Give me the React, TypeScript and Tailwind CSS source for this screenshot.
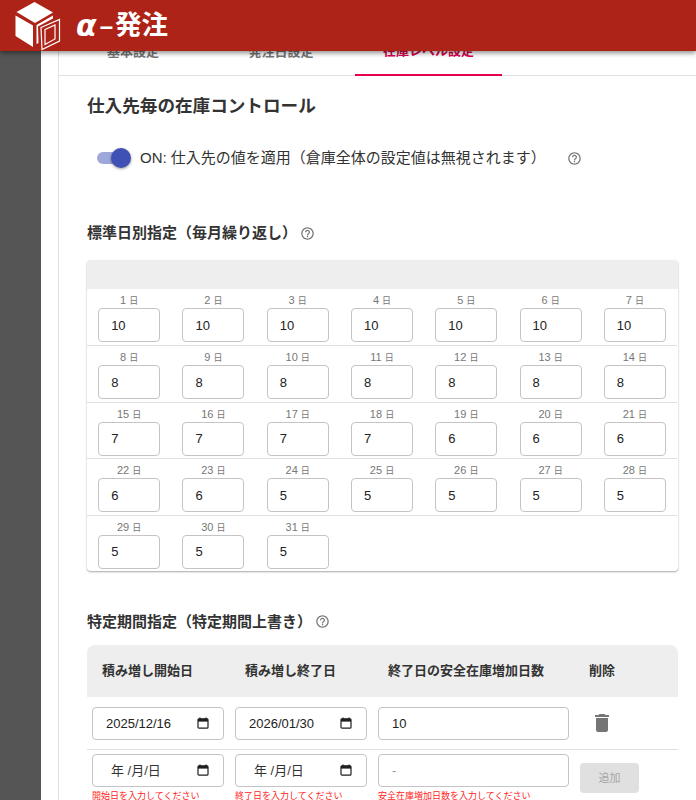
import React from "react";

const font = { fontFamily: '"Liberation Sans", "Noto Sans CJK JP", sans-serif' };

const days = [10,10,10,10,10,10,10,8,8,8,8,8,8,8,7,7,7,7,6,6,6,6,6,5,5,5,5,5,5,5,5];
const rows: number[][] = [];
for (let i = 0; i < days.length; i += 7) rows.push(days.slice(i, i + 7).map((_, j) => i + j));

function Help() {
  return (
    <svg width="15" height="15" viewBox="0 0 24 24" fill="#757575" className="shrink-0">
      <path d="M11 18h2v-2h-2v2zm1-16C6.48 2 2 6.48 2 12s4.48 10 10 10 10-4.48 10-10S17.52 2 12 2zm0 18c-4.41 0-8-3.59-8-8s3.59-8 8-8 8 3.59 8 8-3.59 8-8 8zm0-14c-2.21 0-4 1.79-4 4h2c0-1.1.9-2 2-2s2 .9 2 2c0 2-3 1.75-3 5h2c0-2.25 3-2.5 3-5 0-2.21-1.79-4-4-4z" />
    </svg>
  );
}

function Cal() {
  return (
    <svg width="12" height="12" viewBox="0 0 12 12" fill="none" className="shrink-0">
      <path d="M3 0.5v1.5M9 0.5v1.5" stroke="#1f1f1f" strokeWidth="1.2" />
      <rect x="1" y="1.8" width="10" height="9.4" rx="1" stroke="#1f1f1f" strokeWidth="1.2" />
      <rect x="1" y="1.8" width="10" height="2.8" fill="#1f1f1f" />
    </svg>
  );
}

function DateBox({ value, placeholder }: { value: string; placeholder?: boolean }) {
  return (
    <div className="flex h-[33px] w-[132px] items-center justify-between rounded border border-[#c4c4c4] bg-white pl-[13px] pr-[14px] text-[13px] text-[#222]">
      <span className={placeholder ? "pl-[5px] text-[#333]" : ""}>{value}</span>
      <Cal />
    </div>
  );
}

function Logo() {
  return (
    <svg width="62" height="52" viewBox="0 0 62 52" className="shrink-0">
      <path d="M16.5 12 L34.5 2 L53 12.5 L35 23 Z" fill="#fff" />
      <path d="M15.5 15.5 L33 25.5 L33 47 L15.5 36 Z" fill="#fff" />
      <path d="M36.5 25 L53 15.5 L53 18.5 L38 26.5 L38.5 43 L36.5 44 Z" fill="#fff" />
      <path d="M41 27.5 L59.5 19.5 L59.5 41 L42 49.5 Z" fill="none" stroke="#fff" strokeWidth="1.2" />
      <path d="M45 29.5 L55 25 L55 39 L45 44.5 Z" fill="none" stroke="#fff" strokeWidth="1.2" />
    </svg>
  );
}

export default function App() {
  return (
    <div className="relative flex h-[800px] w-[696px] overflow-hidden bg-white text-[#333]" style={font}>
      <div className="absolute left-0 top-0 z-10 flex h-[51px] w-full items-center bg-[#ae2318] shadow-[0_2px_5px_rgba(0,0,0,0.45)]">
        <Logo />
        <span className="ml-[14px] text-[30px] font-bold italic leading-none text-white" style={{ fontFamily: '"DejaVu Sans", sans-serif' }}>α</span>
        <span className="ml-[3px] text-[24px] font-bold leading-none text-white">–</span>
        <span className="ml-[2px] text-[26.5px] font-bold leading-none text-white">発注</span>
      </div>

      <div className="w-[41px] shrink-0 bg-[#555555]" />

      <div className="min-w-0 flex-1 pl-[17px] pt-[27px]">
        <div className="h-full border-l border-[#e0e0e0]">
          <div className="flex h-[49px] border-b border-[#e0e0e0] text-[13px] font-bold text-[#757575]">
            <div className="flex w-[148px] items-center justify-center pt-px">基本設定</div>
            <div className="flex w-[148px] items-center justify-center pt-px">発注日設定</div>
            <div className="-mb-px flex w-[147px] items-center justify-center border-b-2 border-[#e6004c] pt-px text-[#d6004f]">在庫レベル設定</div>
          </div>

          <div className="pl-7 pr-[18px]">
            <h2 className="mt-[18px] text-[17.6px] font-bold leading-6 text-[#333]">仕入先毎の在庫コントロール</h2>

            <div className="mt-[30px] flex h-5 items-center">
              <div className="relative ml-[10px] h-3 w-[33px] rounded-full bg-[#9fa8da]">
                <div className="absolute -right-px -top-1 h-5 w-5 rounded-full bg-[#3f51b5] shadow-[0_1px_3px_rgba(0,0,0,0.4)]" />
              </div>
              <span className="ml-[10px] text-[15px] text-[#333]">ON: 仕入先の値を適用（倉庫全体の設定値は無視されます）</span>
              <span className="ml-[21px] flex"><Help /></span>
            </div>

            <div className="mt-[55px] flex h-5 items-center">
              <h3 className="text-[15px] font-bold text-[#333]">標準日別指定（毎月繰り返し）</h3>
              <span className="ml-[3px] flex"><Help /></span>
            </div>

            <div className="mt-[17px] w-[591px] overflow-hidden rounded shadow-[0_1px_2px_rgba(0,0,0,0.35)]">
              <div className="h-[29px] bg-[#eeeeee]" />
              {rows.map((r, ri) => (
                <div key={ri} className={`grid h-[56.4px] w-[590px] grid-cols-7 ${ri > 0 ? "border-t border-[#e0e0e0]" : ""}`}>
                  {r.map((d) => (
                    <div key={d} className="flex flex-col items-center pt-[5px]">
                      <div className="h-[13px] text-[11px] leading-[13px] text-[#777]">
                        {d + 1} <span className="text-[9px]">日</span>
                      </div>
                      <input
                        readOnly
                        value={days[d]}
                        className="mt-[1px] h-[34px] w-[62px] rounded border border-[#c4c4c4] bg-white pl-[12px] text-[13px] text-[#222] outline-none"
                      />
                    </div>
                  ))}
                </div>
              ))}
            </div>

            <div className="mt-[41px] flex h-5 items-center">
              <h3 className="text-[15px] font-bold text-[#333]">特定期間指定（特定期間上書き）</h3>
              <span className="ml-[3px] flex"><Help /></span>
            </div>

            <div className="mt-[13px] w-[591px]">
              <div className="flex h-[52px] items-center rounded-t-lg bg-[#eeeeee] text-[13px] font-bold text-[#333]">
                <div className="w-[143px] pl-[15px]">積み増し開始日</div>
                <div className="w-[143px] pl-[15px]">積み増し終了日</div>
                <div className="w-[202px] pl-[15px]">終了日の安全在庫増加日数</div>
                <div className="pl-[14px]">削除</div>
              </div>
              <div className="flex h-[53px] items-center gap-[11px] border-b border-[#e0e0e0] pl-[5px] pt-px">
                <DateBox value="2025/12/16" />
                <DateBox value="2026/01/30" />
                <input readOnly value="10" className="h-[33px] w-[191px] rounded border border-[#c4c4c4] bg-white pl-[13px] text-[13px] text-[#222] outline-none" />
                <svg width="24" height="24" viewBox="0 0 24 24" fill="#757575" className="ml-[10px] shrink-0">
                  <path d="M6 19c0 1.1.9 2 2 2h8c1.1 0 2-.9 2-2V7H6v12zM19 4h-3.5l-1-1h-5l-1 1H5v2h14V4z" />
                </svg>
              </div>
              <div className="flex gap-[11px] pl-[5px] pt-[4px]">
                <div>
                  <DateBox value="年 /月/日" placeholder />
                  <div className="mt-[3px] text-[9px] leading-[13px] text-[#ff2222]">開始日を入力してください</div>
                </div>
                <div>
                  <DateBox value="年 /月/日" placeholder />
                  <div className="mt-[3px] text-[9px] leading-[13px] text-[#ff2222]">終了日を入力してください</div>
                </div>
                <div>
                  <input readOnly placeholder="-" className="h-[33px] w-[191px] rounded border border-[#c4c4c4] bg-white pl-[13px] text-[13px] outline-none placeholder:text-[#999]" />
                  <div className="mt-[3px] text-[9px] leading-[13px] text-[#ff2222]">安全在庫増加日数を入力してください</div>
                </div>
                <button className="mt-[9px] h-[30px] w-[59px] rounded bg-[#e0e0e0] text-[11px] text-[#a6a6a6]">追加</button>
              </div>
            </div>
          </div>
        </div>
      </div>
    </div>
  );
}
